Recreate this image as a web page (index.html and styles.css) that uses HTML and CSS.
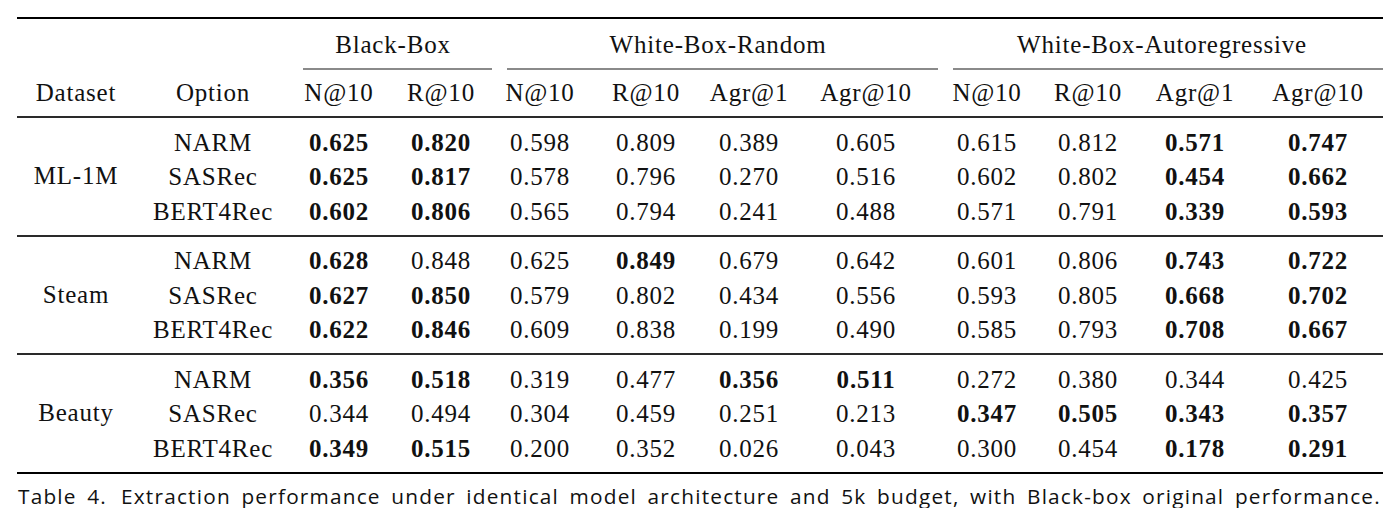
FILE: index.html
```html
<!DOCTYPE html>
<html lang="en">
<head>
<meta charset="utf-8">
<title>Table 4</title>
<link rel="stylesheet" href="styles.css">
</head>
<body>
<figure class="fig">
<table class="results">
<colgroup>
<col class="c-ds"><col class="c-opt">
<col class="c-bbn"><col class="c-bbr">
<col class="c-wrn"><col class="c-wrr"><col class="c-wra1"><col class="c-wra10">
<col class="c-wan"><col class="c-war"><col class="c-waa1"><col class="c-waa10">
</colgroup>
<thead>
<tr class="group-row">
<th></th><th></th>
<th colspan="2"><div class="grp-label">Black-Box</div><div class="cmid"></div></th>
<th colspan="4"><div class="grp-label">White-Box-Random</div><div class="cmid"></div></th>
<th colspan="4"><div class="grp-label">White-Box-Autoregressive</div><div class="cmid cmid-last"></div></th>
</tr>
<tr class="col-row">
<th>Dataset</th><th>Option</th>
<th>N@10</th><th>R@10</th>
<th>N@10</th><th>R@10</th><th>Agr@1</th><th>Agr@10</th>
<th>N@10</th><th>R@10</th><th>Agr@1</th><th class="last">Agr@10</th>
</tr>
</thead>
<tbody class="grp">
<tr class="first">
<td rowspan="3" class="ds">ML-1M</td><td>NARM</td>
<td class="b">0.625</td><td class="b">0.820</td>
<td>0.598</td><td>0.809</td><td>0.389</td><td>0.605</td>
<td>0.615</td><td>0.812</td><td class="b">0.571</td><td class="b last">0.747</td>
</tr>
<tr>
<td>SASRec</td>
<td class="b">0.625</td><td class="b">0.817</td>
<td>0.578</td><td>0.796</td><td>0.270</td><td>0.516</td>
<td>0.602</td><td>0.802</td><td class="b">0.454</td><td class="b last">0.662</td>
</tr>
<tr class="final">
<td>BERT4Rec</td>
<td class="b">0.602</td><td class="b">0.806</td>
<td>0.565</td><td>0.794</td><td>0.241</td><td>0.488</td>
<td>0.571</td><td>0.791</td><td class="b">0.339</td><td class="b last">0.593</td>
</tr>
</tbody>
<tbody class="grp">
<tr class="first">
<td rowspan="3" class="ds">Steam</td><td>NARM</td>
<td class="b">0.628</td><td>0.848</td>
<td>0.625</td><td class="b">0.849</td><td>0.679</td><td>0.642</td>
<td>0.601</td><td>0.806</td><td class="b">0.743</td><td class="b last">0.722</td>
</tr>
<tr>
<td>SASRec</td>
<td class="b">0.627</td><td class="b">0.850</td>
<td>0.579</td><td>0.802</td><td>0.434</td><td>0.556</td>
<td>0.593</td><td>0.805</td><td class="b">0.668</td><td class="b last">0.702</td>
</tr>
<tr class="final">
<td>BERT4Rec</td>
<td class="b">0.622</td><td class="b">0.846</td>
<td>0.609</td><td>0.838</td><td>0.199</td><td>0.490</td>
<td>0.585</td><td>0.793</td><td class="b">0.708</td><td class="b last">0.667</td>
</tr>
</tbody>
<tbody class="grp grp-end">
<tr class="first">
<td rowspan="3" class="ds">Beauty</td><td>NARM</td>
<td class="b">0.356</td><td class="b">0.518</td>
<td>0.319</td><td>0.477</td><td class="b">0.356</td><td class="b">0.511</td>
<td>0.272</td><td>0.380</td><td>0.344</td><td class="last">0.425</td>
</tr>
<tr>
<td>SASRec</td>
<td>0.344</td><td>0.494</td>
<td>0.304</td><td>0.459</td><td>0.251</td><td>0.213</td>
<td class="b">0.347</td><td class="b">0.505</td><td class="b">0.343</td><td class="b last">0.357</td>
</tr>
<tr class="final">
<td>BERT4Rec</td>
<td class="b">0.349</td><td class="b">0.515</td>
<td>0.200</td><td>0.352</td><td>0.026</td><td>0.043</td>
<td>0.300</td><td>0.454</td><td class="b">0.178</td><td class="b last">0.291</td>
</tr>
</tbody>
</table>
<figcaption class="caption"><span class="cap-label">Table 4.</span>Extraction performance under identical model architecture and 5k budget, with Black-box original performance.</figcaption>
</figure>
</body>
</html>
```
FILE: styles.css
```css
html, body {
  margin: 0;
  padding: 0;
  background: #ffffff;
}

.fig {
  margin: 0;
  padding: 17px 0 0 17px;
  width: 1366px;
}

.results {
  width: 1366px;
  table-layout: fixed;
  border-collapse: collapse;
  font-family: "Liberation Serif", "Times New Roman", serif;
  font-size: 25px;
  letter-spacing: 0.8px;
  color: #111;
  border-top: 2px solid #000;
  border-bottom: 2px solid #000;
}

.c-ds { width: 118px; }
.c-opt { width: 156px; }
.c-bbn { width: 96px; }
.c-bbr { width: 108px; }
.c-wrn { width: 90px; }
.c-wrr { width: 122px; }
.c-wra1 { width: 84px; }
.c-wra10 { width: 150px; }
.c-wan { width: 92px; }
.c-war { width: 110px; }
.c-waa1 { width: 104px; }
.c-waa10 { width: 136px; }

.results th,
.results td {
  padding: 0;
  text-align: center;
  font-weight: normal;
  white-space: nowrap;
}

.group-row th {
  padding-top: 11px;
  padding-bottom: 0;
  vertical-align: top;
}

.grp-label {
  line-height: 30px;
  height: 30px;
}

.cmid {
  margin: 8px 3px 0 12px;
  border-top: 2px solid #8a8a8a;
}

.cmid-last {
  margin-right: 0;
}

.col-row th {
  line-height: 30px;
  padding-top: 8px;
  padding-bottom: 8px;
  border-bottom: 2px solid #2a2a2a;
}

.grp td {
  line-height: 34.5px;
  height: 34.5px;
}

.grp tr.first td {
  padding-top: 7.5px;
}

.grp tr.final td {
  padding-bottom: 5.5px;
}

.grp tr.first td.ds {
  vertical-align: middle;
  padding-top: 0;
  padding-bottom: 0;
}

.grp {
  border-bottom: 2px solid #2a2a2a;
}

.grp-end {
  border-bottom: 2px solid #000;
}

.results .last {
  padding-left: 6px;
}

.results .b {
  font-weight: bold;
}

.caption {
  margin: 10px 0 0 1px;
  font-family: "Open Sans", "Liberation Sans", sans-serif;
  font-size: 20.8px;
  letter-spacing: 1.2px;
  word-spacing: 4px;
  line-height: 24px;
  color: #111;
  white-space: nowrap;
}

.cap-label {
  display: inline-block;
  margin-right: 14px;
}
```
